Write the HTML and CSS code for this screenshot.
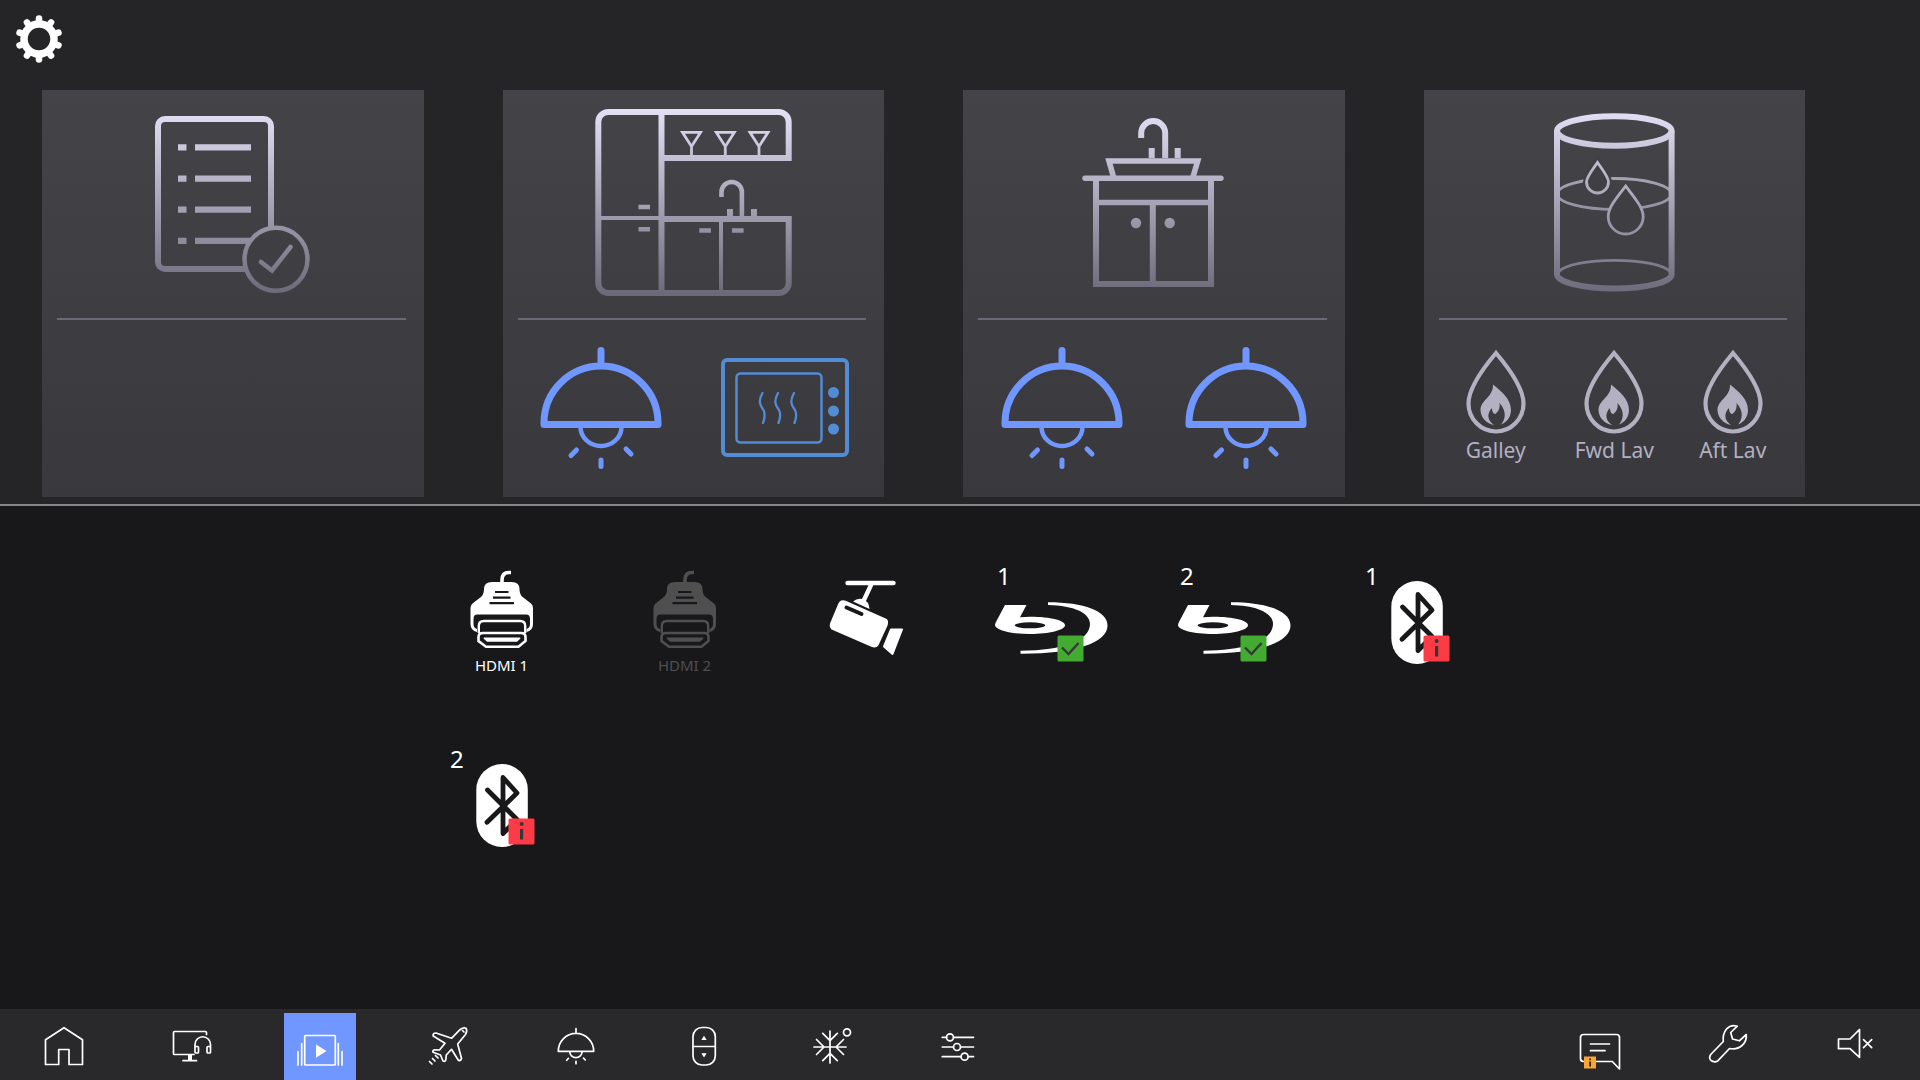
FILE: index.html
```html
<!DOCTYPE html>
<html lang="en">
<head>
<meta charset="utf-8">
<title>Cabin Media</title>
<meta name="viewport" content="width=device-width, initial-scale=1">
<link rel="stylesheet" href="styles.css">
</head>
<body>
<header class="top">
  <div class="toolbar">
    <button class="settings" aria-label="Settings">
      <svg width="48" height="48" viewBox="0 0 48 48">
        <g stroke="#fff" stroke-width="6.500" stroke-linecap="round">
          <path d="M24 3.500V44.500"/>
          <path d="M24 3.500V44.500" transform="rotate(36 24 24)"/>
          <path d="M24 3.500V44.500" transform="rotate(72 24 24)"/>
          <path d="M24 3.500V44.500" transform="rotate(108 24 24)"/>
          <path d="M24 3.500V44.500" transform="rotate(144 24 24)"/>
        </g>
        <circle cx="24" cy="24" r="15" fill="#252527" stroke="#fff" stroke-width="7.500"/>
      </svg>
    </button>
  </div>
  <div class="cards">
    <section class="card">
      <button class="hero" aria-label="Checklist">
        <svg class="hero-icon" viewBox="122 104 220 200">
          <defs>
            <linearGradient id="fade" gradientUnits="userSpaceOnUse" x1="0" y1="112" x2="0" y2="294">
              <stop offset="0" stop-color="#e2def4"/>
              <stop offset="1" stop-color="#6c6979"/>
            </linearGradient>
          </defs>
          <g fill="none" stroke="url(#fade)" stroke-width="6">
            <rect x="158" y="119" width="113" height="150" rx="7"/>
            <g fill="url(#fade)" stroke="none">
              <path d="M178 144.300h8.500v6.200h-8.500zM178 175.500h8.500v6.200h-8.500zM178 206.500h8.500v6.200h-8.500zM178 237.700h8.500v6.200h-8.500z"/>
              <path d="M195 144.300h56v6.200h-56zM195 175.500h56v6.200h-56zM195 206.500h56v6.200h-56zM195 237.700h56v6.200h-56z"/>
            </g>
            <circle cx="276" cy="259.300" r="31.500" fill="#3f3e42" stroke-width="4.500"/>
            <path d="M261 262l11 8.500 18.500-23.500" stroke-width="4.500" stroke-linecap="round"/>
          </g>
        </svg>
      </button>
      <hr class="rule">
    </section>

    <section class="card">
      <button class="hero" aria-label="Galley">
        <svg class="hero-icon" viewBox="582 104 220 200">
          <g fill="none" stroke="url(#fade)" stroke-width="6">
            <path d="M662 158H787.700V122a10 10 0 0 0-10-10H607.300a10 10 0 0 0-10 10V283a10 10 0 0 0 10 10H777.700a10 10 0 0 0 10-10V219H662"/>
            <path d="M657.500 112h6v181h-6z" fill="url(#fade)" stroke="none"/>
            <path d="M598 216h62v4h-62zM718 220h4v72h-4z" fill="url(#fade)" stroke="none"/>
            <path d="M637.500 204.800H649v4.400h-11.500zM637.500 227H649v4.400h-11.500zM698.300 228.300h11.600v4.400h-11.600zM731 228.300h11.600v4.400H731zM726 209h6v8h-6zM750 209h6v8h-6z" fill="url(#fade)" stroke="none"/>
            <path d="M720.500 197V192.200a10.200 10.200 0 0 1 20.400 0V217" stroke-width="4.600"/>
            <path d="M681.500 132.400H699.500L690.500 146.500zM690.500 146v10M715.300 132.400H733.300L724.300 146.500zM724.300 146v10M749 132.400H767L758 146.500zM758 146v10" stroke-width="2.800"/>
          </g>
        </svg>
      </button>
      <hr class="rule">
      <div class="controls pair">
        <button aria-label="Galley light">
          <svg width="122" height="122" viewBox="0 0 122 122">
            <g id="lamp" fill="none" stroke="#7096ff" stroke-width="7" stroke-linejoin="round" stroke-linecap="round">
              <path d="M61 3.500V17M4 77.500V76a57 57 0 0 1 114 0V77.500z"/>
              <path d="M40.500 80a20.500 19 0 0 0 41 0" stroke-width="4.500"/>
              <path d="M36.500 103l-5.500 5.500M61 113v6.500M86 102l5 5" stroke-width="5"/>
            </g>
          </svg>
        </button>
        <button aria-label="Galley oven">
          <svg width="128" height="100" viewBox="0 0 128 100">
            <g fill="none" stroke="#528cd4" stroke-width="4">
              <rect x="2" y="2" width="124" height="95" rx="4"/>
              <rect x="15.500" y="15.500" width="85" height="69" rx="4" stroke-width="2.500"/>
              <path d="M41.500 35C37 43 39 47 41.500 50.500C44.500 54 44.500 58 42 65M57 35C52.500 43 54.500 47 57 50.500C60 54 60 58 57.500 65M73 35C68.500 43 70.500 47 73 50.500C76 54 76 58 73.500 65" stroke-width="2.300" stroke-linecap="round"/>
              <g fill="#528cd4" stroke="none"><circle cx="112.500" cy="34.500" r="5.500"/><circle cx="112.500" cy="53" r="5.500"/><circle cx="112.500" cy="71" r="5.500"/></g>
            </g>
          </svg>
        </button>
      </div>
    </section>

    <section class="card">
      <button class="hero" aria-label="Lavatory">
        <svg class="hero-icon" viewBox="1043 104 220 200">
          <g fill="none" stroke="url(#fade)" stroke-width="6">
            <path d="M1141.200 138V133a12 12 0 0 1 24 0V158"/>
            <path d="M1148.700 148h6v10h-6zM1174.700 148h6v10h-6z" fill="url(#fade)" stroke="none"/>
            <path d="M1113.500 177L1109 161H1197.700L1193 177" stroke-width="5.600"/>
            <path d="M1085 175.600H1221a2.700 2.700 0 0 1 0 5.400H1085a2.700 2.700 0 0 1 0-5.400z" fill="url(#fade)" stroke="none"/>
            <path d="M1096 180V284H1211V180"/>
            <path d="M1098 199.700h111v5.600h-111zM1149.800 204h6v80h-6z" fill="url(#fade)" stroke="none"/>
            <g fill="url(#fade)" stroke="none"><circle cx="1136" cy="223" r="5.200"/><circle cx="1169.700" cy="223" r="5.200"/></g>
          </g>
        </svg>
      </button>
      <hr class="rule">
      <div class="controls pair">
        <button aria-label="Lavatory light 1"><svg width="122" height="122" viewBox="0 0 122 122"><use href="#lamp"/></svg></button>
        <button aria-label="Lavatory light 2"><svg width="122" height="122" viewBox="0 0 122 122"><use href="#lamp"/></svg></button>
      </div>
    </section>

    <section class="card">
      <button class="hero" aria-label="Water tank">
        <svg class="hero-icon" viewBox="1503 104 220 200">
          <g fill="none" stroke="url(#fade)" stroke-width="6">
            <ellipse cx="1613.300" cy="194" rx="57" ry="15.500" stroke-width="2.800" opacity="0.850"/>
            <path d="M1558 271.500A57 14.500 0 0 1 1669 271.500" stroke-width="2.800"/>
            <ellipse cx="1613.300" cy="131" rx="57.300" ry="14.800"/>
            <path d="M1556 131V274.500A57.300 14 0 0 0 1670.600 274.500V131"/>
            <path d="M1596.500 162.500C1592 169 1585.500 177 1585.500 182a11 11 0 0 0 22 0C1607.500 177 1601 169 1596.500 162.500z" fill="#403f43" stroke="#403f43" stroke-width="7"/>
            <path d="M1596.500 162.500C1592 169 1585.500 177 1585.500 182a11 11 0 0 0 22 0C1607.500 177 1601 169 1596.500 162.500z" stroke-width="2.800"/>
            <path d="M1624.700 186C1617 196 1607.200 207 1607.200 216.500a17.500 17.500 0 0 0 35 0C1642.200 207 1632 196 1624.700 186z" fill="#3f3e42" stroke-width="2.800"/>
          </g>
        </svg>
      </button>
      <hr class="rule">
      <div class="controls trio">
        <button class="heater">
          <svg width="60" height="84" viewBox="0 0 60 84">
            <g id="heat">
              <path d="M30 3C19 16 2.500 37 2.500 53.500a27.500 28 0 0 0 55 0C57.500 37 41 16 30 3z" fill="none" stroke="#b3b0c2" stroke-width="4.200"/>
              <path d="M27 34.500C35 41 45 49 45 60C45 68 40 72.500 35 74.500C39 70 41.500 62 33.500 53C34 58 33 61 29.500 64C27 64 26 61 26 58C20 64 22 71 28 75C20 73.500 14.500 67 14.500 60C14.500 50 27.500 47 27 34.500z" fill="#b3b0c2"/>
            </g>
          </svg>
          <span>Galley</span>
        </button>
        <button class="heater"><svg width="60" height="84" viewBox="0 0 60 84"><use href="#heat"/></svg><span>Fwd Lav</span></button>
        <button class="heater"><svg width="60" height="84" viewBox="0 0 60 84"><use href="#heat"/></svg><span>Aft Lav</span></button>
      </div>
    </section>
  </div>
</header>

<main class="sources">
  <button class="source hdmi">
    <svg width="124" height="86" viewBox="0 0 124 86">
      <g id="hdmi" fill="none" stroke="currentColor">
        <path d="M71 4.500H69Q62 4.500 62 12V16" stroke-width="3.600"/>
        <path d="M52 14H71.500Q79.500 14 79.500 21Q79.500 26 82 28.500L91 35.500Q93 37 93 40V56Q93 62.500 86.500 64V61Q90 60 90 56V51Q90 46.600 86 46.600H37.500Q33.500 46.600 33.500 51V56Q33.500 60 37 61V64Q30.500 62.500 30.500 56V40Q30.500 37 32.500 35.500L41.500 28.500Q44 26 44 21Q44 14 52 14z" fill="currentColor" stroke="none"/>
        <path d="M55 24H68.500M53 29.700H70.500M49.500 35.200H74" stroke="#18181a" stroke-width="2.200"/>
        <path d="M38.800 65V58Q38.800 53 43.800 53H80.200Q85.200 53 85.200 58V65" stroke-width="2.400"/>
        <path d="M43 65H81Q85.500 65 85.500 69V73L78.500 78.700H46L38.500 73V69Q38.500 65 43 65z" stroke-width="2.600"/>
        <path d="M44 69.500H80L80.500 70.500L77 73.700H47L43.500 70.500z" fill="currentColor" stroke="none"/>
      </g>
    </svg>
    <span>HDMI 1</span>
  </button>
  <button class="source hdmi" disabled>
    <svg width="124" height="86" viewBox="0 0 124 86"><use href="#hdmi"/></svg>
    <span>HDMI 2</span>
  </button>
  <button class="source" aria-label="Camera">
    <svg width="124" height="100" viewBox="0 0 124 100">
      <g fill="#fff" stroke="#fff" stroke-linecap="round">
        <path d="M41.500 15H87.500" stroke-width="4.400"/>
        <path d="M65 17L57.500 33" stroke-width="4.400"/>
        <path d="M47 33.500Q51 30 56.500 31Q63 33 63.500 41z" stroke="none"/>
        <path d="M38.500 35.500L79 53.500Q79.500 54 78.500 57L70 75.500Q69 77 66.500 76L28.500 59.500Q26 58.500 27 56L35 37Q36 34.500 38.500 35.500z" stroke-width="6" stroke-linejoin="round"/>
        <path d="M40.500 39.500L55.500 46" stroke="#18181a" stroke-width="4"/>
        <path d="M85 61.500H96L86.500 86L78 78.500z" stroke-width="2" stroke-linejoin="round"/>
      </g>
    </svg>
  </button>
  <button class="source disc">
    <span class="number">1</span>
    <svg width="124" height="100" viewBox="0 0 124 100">
      <g id="bluray">
        <path d="M16 37H37.500L31 49.200Q36 48.800 41 48.800C62 48.800 76 52.500 76 57.300S60 66 41 66S6 62 6 57Q6 55.500 8 52zM25.700 57.300a15.300 3 0 0 0 30.600 0a15.300 3 0 0 0-30.600 0z" fill="#fff" fill-rule="evenodd"/>
        <path d="M59 34.300C95 34.300 118.500 43 118.500 57.500C118.500 75 85 86 31.500 85.700V82.700C75 82.500 101 72 101 56C101 45 85 37.500 59 37z" fill="#fff"/>
        <rect x="68.500" y="67.500" width="26" height="26" rx="1.500" fill="#43aa32"/>
        <path d="M73 79.500L79.500 86L89.500 75" fill="none" stroke="#363a38" stroke-width="2.400"/>
      </g>
    </svg>
  </button>
  <button class="source disc">
    <span class="number">2</span>
    <svg width="124" height="100" viewBox="0 0 124 100"><use href="#bluray"/></svg>
  </button>
  <button class="source">
    <span class="number">1</span>
    <svg width="124" height="100" viewBox="0 0 124 100">
      <g id="bluetooth">
        <rect x="36.300" y="13" width="51.500" height="83" rx="25.700" fill="#fff"/>
        <path d="M47.500 39L77 68.500L63 82.500V26.500L77 42L47 71.300" fill="none" stroke="#18181a" stroke-width="4.800" stroke-linecap="round" stroke-linejoin="round"/>
        <rect x="68.500" y="67.500" width="26" height="26" rx="1.500" fill="#fb3c47"/>
        <path d="M80 78h3.200v10.500H80z" fill="#363639"/><circle cx="81.600" cy="73" r="2" fill="#363639"/>
      </g>
    </svg>
  </button>
  <button class="source">
    <span class="number">2</span>
    <svg width="124" height="100" viewBox="0 0 124 100"><use href="#bluetooth"/></svg>
  </button>
</main>

<nav class="nav" aria-label="Main">
  <button aria-label="Home"><svg viewBox="0 0 72 67"><path d="M17.500 26.700L36 14.700L54.500 26.700V51.500H41V36.500H30.700V51.500H17.500z"/></svg></button>
  <button aria-label="Entertainment"><svg viewBox="0 0 72 67">
    <path d="M50.500 21.500V19.500Q50.500 18.500 49.500 18.500H18.500Q17.500 18.500 17.500 19.500V40.500Q17.500 41.500 18.500 41.500H38M27 47.700H40.500"/>
    <path class="solid" d="M32 41.500h4v6h-4z"/>
    <path d="M39 34V31.500a7.700 7.700 0 0 1 15.500 0V34"/>
    <rect x="39" y="33.500" width="3.500" height="6.500" rx="1"/><rect x="51" y="33.500" width="3.500" height="6.500" rx="1"/>
  </svg></button>
  <button class="active" aria-label="Media" aria-current="page"><svg viewBox="0 0 72 67">
    <rect x="20.700" y="22.500" width="30.600" height="29.500" rx="1"/><path class="solid" d="M32 31.500L42.500 38L32 44.700z"/>
    <path d="M14 38.700V52M17.700 30.500V52M54.300 30.500V52M58 38.700V52"/>
  </svg></button>
  <button aria-label="Flight"><svg viewBox="0 0 72 67">
    <path d="M54 15.200C52 14.500 49.500 15.500 48 16.700L39.700 25.200L24 20Q20.500 20 21.200 23L33 30.300L27.500 37L22.500 36.800Q20.500 37.500 21 39.300L28.500 42L31 48Q33 49 33.700 47.300L34.300 42L39.500 36.300L46.500 47.500Q49 48 49.500 45.500L45.700 31L53.500 21.500C54.500 20 55 17 54 15.200z"/>
    <path d="M50.500 17.500L52 19M17.500 48.500L20 51M20.500 45.500L23 48M23.500 42.500L26 45"/>
  </svg></button>
  <button aria-label="Lights"><svg viewBox="0 0 72 67">
    <path d="M36 15.500V20M18.300 38.300a17.700 18 0 0 1 35.400 0zM29.700 38.500a6.200 6.200 0 0 0 12.400 0M28.500 45.300L26.700 47.300M36 48.300V50.700M43.500 45.200L45.300 47"/>
  </svg></button>
  <button aria-label="Shades"><svg viewBox="0 0 72 67">
    <rect x="25" y="14.500" width="22.300" height="37.500" rx="9"/><path d="M25 33.500H47"/><path class="solid" d="M36 22.700L38.700 27H33.300zM33.300 40.300H38.700L36 44.500z"/>
  </svg></button>
  <button aria-label="Climate"><svg viewBox="0 0 72 67">
    <path d="M18 34H50M34 18V50M26.700 20.300L34 27.700L41.300 20.300M26.700 47.700L34 40.300L41.300 47.700M20.500 26.500L28 34L20.500 41.500M47.500 26.500L40 34L47.500 41.500"/><circle cx="51" cy="19.300" r="3.500"/>
  </svg></button>
  <button aria-label="Presets"><svg viewBox="0 0 72 67">
    <path d="M18.300 24.300H22.500M29.500 24.300H49.500M18.300 34H29.500M36.500 34H49.500M18.300 43.700H37M44.200 43.700H49.500"/><circle cx="26" cy="24.300" r="3.500"/><circle cx="33" cy="34" r="3.500"/><circle cx="40.600" cy="43.700" r="3.500"/>
  </svg></button>
  <button class="messages" aria-label="Messages"><svg viewBox="0 0 72 67">
    <path d="M19.500 48.500Q16.500 48.500 16.500 45.500V24.500Q16.500 21.500 19.500 21.500H52.500Q55.500 21.500 55.500 24.500V56L48.300 48.500zM26.500 31H45.500M26.500 37.700H41"/>
    <path class="alert" d="M20 43.500h12v12H20z"/><path class="mark" d="M25.200 48.500h1.800v5h-1.800zM25.200 45.500h1.800v1.800h-1.800z"/>
  </svg></button>
  <button aria-label="Service"><svg viewBox="0 0 72 67">
    <path d="M45.300 13.200Q39 11 34.300 16.200Q30.500 21 31.300 28.500L18.700 41.500Q16.500 45 19 47.500Q22.500 50 26 47.700L37.500 35.500Q45 37 50 32.500Q55 28 54.300 21.500L47.300 27.800L40.500 26L38.700 19.500z"/>
  </svg></button>
  <button aria-label="Mute"><svg viewBox="0 0 72 67">
    <path d="M18.500 26H30L39.500 16.500V44.300L30 35.700H18.500zM43.500 26.700L51.700 34.700M51.700 26.700L43.500 34.700"/>
  </svg></button>
</nav>
</body>
</html>
```

FILE: styles.css
```css
* { box-sizing: border-box; }

body {
  margin: 0;
  min-height: 100vh;
  display: flex;
  flex-direction: column;
  background: #18181a;
  color: #fff;
  font-family: "Noto Sans", "Open Sans", sans-serif;
}

button {
  margin: 0;
  padding: 0;
  border: 0;
  background: none;
  color: inherit;
  font: inherit;
  cursor: pointer;
}

svg { display: block; }

/* Cabin zone cards */
.top {
  background: #252527;
  border-bottom: 2px solid #858587;
  padding-bottom: 7px;
}

.toolbar {
  display: flex;
  padding: 15px 15px 27px;
}

.cards {
  display: grid;
  grid-template-columns: repeat(4, 1fr);
  gap: 79px;
  padding: 0 115px 0 42px;
}

.card {
  display: flex;
  flex-direction: column;
  min-height: 407px;
  background: linear-gradient(#444347, #39383d);
}

.hero {
  display: flex;
  justify-content: center;
  padding: 14px 1px 14px 0;
}

.hero-icon {
  width: 220px;
  height: 200px;
}

.rule {
  align-self: stretch;
  height: 2px;
  margin: 0 18px 0 15px;
  border: 0;
  background: #6b6976;
}

.controls {
  flex: 1;
  display: grid;
  align-items: center;
}

.controls button {
  display: flex;
  flex-direction: column;
  align-items: center;
}

.pair {
  grid-template-columns: 1fr 1fr;
  padding: 0 7px 2px;
}

.trio {
  grid-template-columns: repeat(3, 1fr);
  padding: 0 13px 2px;
}

.heater {
  color: #b3b0c2;
  font-size: 21px;
  line-height: 32px;
}

/* Media sources */
.sources {
  flex: 1;
  display: grid;
  grid-template-columns: repeat(6, 183px);
  grid-auto-rows: 183px;
  justify-content: center;
  padding: 25px 2px 25px 0;
}

.source {
  position: relative;
  display: flex;
  flex-direction: column;
  align-items: center;
  padding-top: 37px;
  font-size: 15px;
  line-height: 22px;
}

.source:disabled { color: #4f4f50; }

.number {
  position: absolute;
  top: 29px;
  left: 40px;
  font-size: 24px;
  line-height: 32px;
}

.disc .number { left: 38px; }

/* Bottom navigation */
.nav {
  display: grid;
  grid-template-columns: repeat(15, 1fr);
  justify-items: center;
  padding-top: 4px;
  background: #29292c;
}

.nav svg {
  width: 72px;
  height: 67px;
  fill: none;
  stroke: #fff;
  stroke-width: 1.7;
  stroke-linejoin: round;
  stroke-linecap: round;
}

.nav .solid { fill: #fff; stroke: none; }
.nav .alert { fill: #f9a535; stroke: none; }
.nav .mark { fill: #29292c; stroke: none; }
.nav .active { background: #7097ff; }
.nav .messages { grid-column: 13; }
```
